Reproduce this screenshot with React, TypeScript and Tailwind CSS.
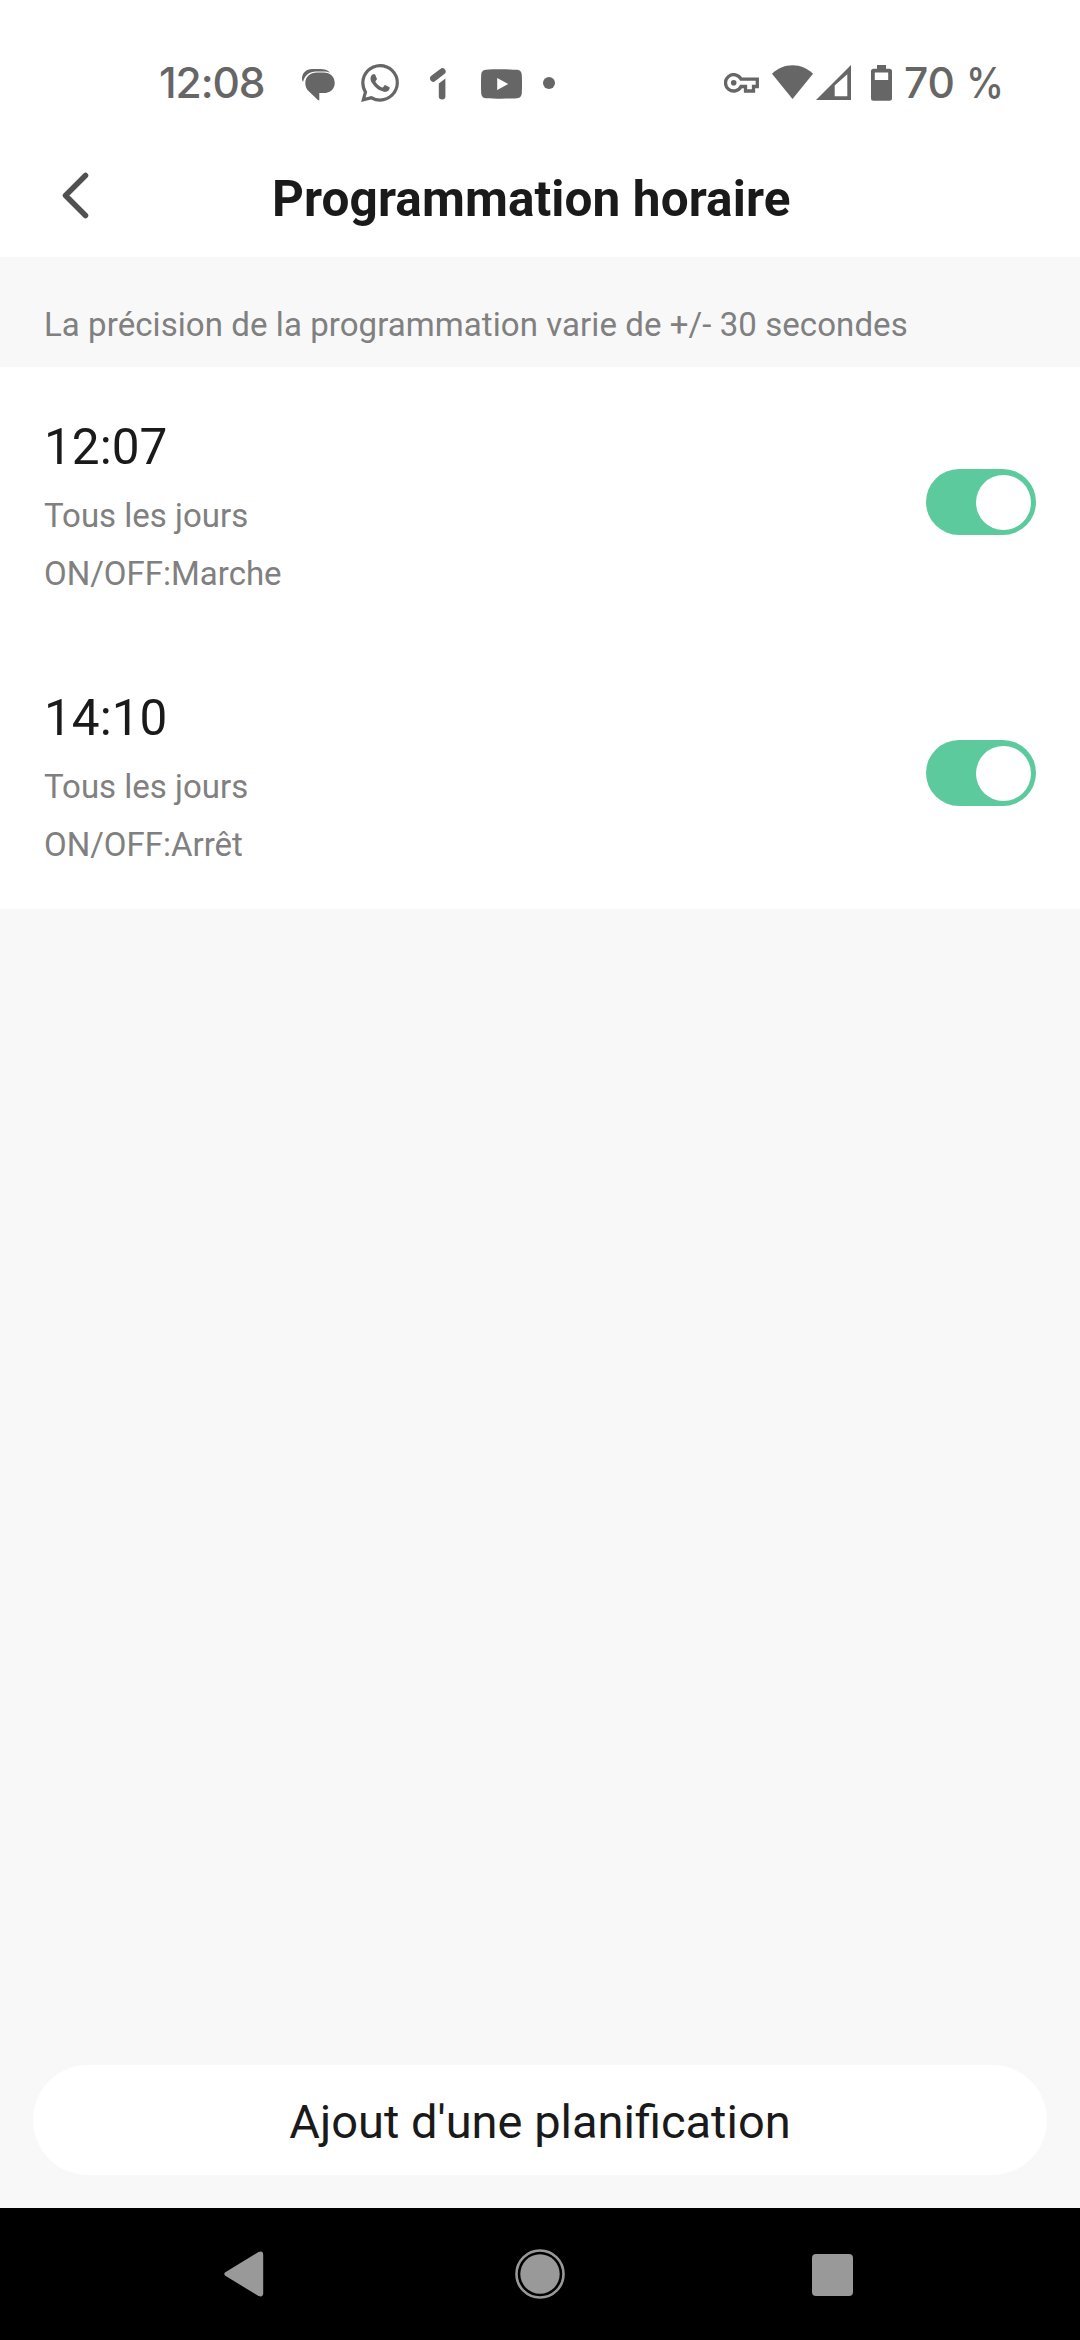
import { SiWhatsapp } from "react-icons/si";

const schedules = [
  { time: "12:07", repeat: "Tous les jours", action: "ON/OFF:Marche" },
  { time: "14:10", repeat: "Tous les jours", action: "ON/OFF:Arrêt" },
];

function MessagesIcon() {
  return (
    <svg className="h-8 w-[33px]" viewBox="0 0 33 32" fill="currentColor">
      <path d="M15 3.6H21.5C28.5 3.6 32.7 8 32.7 13.9S28.5 24 21.5 24H17.3V31.3H16.2L7 22.4C4.5 20.4 3.3 17.6 3.3 14C3.3 8 8 3.6 15 3.6Z" />
      <path d="M1.1 12.8C.4 12 0 10.8 0 9.4C0 4 4.3 0 10 0H18C22.500 0 25.500 1 28.200 3.800C26 2.900 24 2.500 21.500 2.500H14C7.500 2.500 2.600 6.500 1.100 12.800Z" />
    </svg>
  );
}

function OneIcon() {
  return (
    <svg className="h-8 w-4" viewBox="0 0 16 32" fill="currentColor">
      <path d="M3.300 10.400L12.300 3.500" stroke="currentColor" strokeWidth="6.600" strokeLinecap="round" />
      <path d="M8.800 15.500L15.400 10.400V28.200A3.300 3.300 0 0 1 8.800 28.200Z" />
    </svg>
  );
}

function VideoIcon() {
  return (
    <svg className="h-[30px] w-[41px]" viewBox="0 0 41 30" fill="currentColor">
      <path
        fillRule="evenodd"
        d="M5 .8C12 .2 29 .2 36 .8C39.500 1.200 40.600 3 40.800 6C41.100 12 41.100 18 40.800 24C40.600 27 39.500 28.800 36 29.200C29 29.800 12 29.800 5 29.200C1.500 28.800.400 27 .2 24C-.1 18-.1 12 .2 6C.4 3 1.500 1.200 5 .8ZM16.200 9V21L27.200 15Z"
      />
    </svg>
  );
}

function KeyIcon() {
  return (
    <svg className="h-5 w-[35px]" viewBox="0 0 35 20" fill="none" stroke="currentColor" strokeWidth="3.300">
      <path d="M17 6.100A8.200 8.200 0 1 0 17 13.500H21.500V18H29.500V13.500H33.300V6.100Z" />
      <circle cx="9.700" cy="9.800" r="2.800" fill="currentColor" stroke="none" />
    </svg>
  );
}

function WifiIcon() {
  return (
    <svg className="h-[34px] w-[41px]" viewBox="0 0 41 34" fill="currentColor">
      <path d="M20.500 34L0 8.800C5.500 3.200 12.500.2 20.500.2S35.500 3.200 41 8.800Z" />
    </svg>
  );
}

function SignalIcon() {
  return (
    <svg className="h-[35px] w-[35px]" viewBox="0 0 35 35" fill="currentColor">
      <path fillRule="evenodd" d="M0 35L35 0V35ZM18.700 20.500V31.300H31.300V9.300Z" />
    </svg>
  );
}

function BatteryIcon() {
  return (
    <svg className="h-9 w-[21px]" viewBox="0 0 21 36" fill="currentColor">
      <path
        fillRule="evenodd"
        d="M6 0H15V3.800H18.500Q21 3.800 21 6.300V33.200Q21 35.700 18.500 35.700H2.500Q0 35.700 0 33.200V6.300Q0 3.800 2.500 3.800H6ZM3.800 7.500V15H17.200V7.500Z"
      />
    </svg>
  );
}

function StatusBar() {
  return (
    <div className="flex h-[125px] items-center pt-[62px] pb-[21px] font-[Inter] text-[42.5px] font-medium leading-[42px] text-[#666666]">
      <span className="ml-[159px] w-[108px] whitespace-nowrap tracking-[-1.1px]">12:08</span>
      <span className="ml-[35px] mt-[3px]"><MessagesIcon /></span>
      <SiWhatsapp className="ml-[26px] size-[38px] shrink-0" />
      <span className="ml-[31px] mt-px"><OneIcon /></span>
      <span className="ml-[35px] mt-px"><VideoIcon /></span>
      <span className="ml-[21px] size-3 rounded-full bg-[#666666]" />
      <span className="ml-[169px]"><KeyIcon /></span>
      <span className="ml-[13px] -mt-0.5"><WifiIcon /></span>
      <span className="ml-[3px] -mt-px"><SignalIcon /></span>
      <span className="ml-5"><BatteryIcon /></span>
      <span className="ml-3 flex whitespace-nowrap">
        <span>70</span>
        <span className="ml-[11px] origin-left scale-x-90">%</span>
      </span>
    </div>
  );
}

function Header() {
  return (
    <header className="flex h-[132px] items-start">
      <button className="ml-[61px] mt-[47px]" aria-label="Retour">
        <svg className="h-[48px] w-[28px]" viewBox="0 0 28 48" fill="none" stroke="#505050" strokeWidth="5.500" strokeLinecap="round" strokeLinejoin="round">
          <path d="M24.500 3.500L4.500 23.500L24.500 43.500" />
        </svg>
      </button>
      <h1 className="ml-[183px] mt-[45px] whitespace-nowrap text-[49.5px] font-bold leading-[58px] tracking-[0.1px] text-[#1a1a1a]">
        Programmation horaire
      </h1>
    </header>
  );
}

function Toggle() {
  return (
    <button role="switch" aria-checked="true" className="-mt-px flex h-[66px] w-[110px] items-center justify-end rounded-full bg-[#5dca9e] pr-[5.5px]">
      <span className="size-[55px] rounded-full bg-white" />
    </button>
  );
}

export default function App() {
  return (
    <div className="flex h-[2340px] w-[1080px] flex-col overflow-hidden bg-[#f8f8f8] font-[Roboto,sans-serif]">
      <div className="bg-white">
        <StatusBar />
        <Header />
      </div>
      <p className="h-[110px] pl-11 pt-12 text-[33px] leading-[39px] tracking-[0.07px] text-[#808080]">
        La précision de la programmation varie de +/- 30 secondes
      </p>
      <ul className="bg-white">
        {schedules.map((s) => (
          <li key={s.time} className="flex h-[271px] items-center justify-between px-11">
            <div className="flex h-full flex-col pt-[51px] text-[33px] leading-[39px] text-[#808080]">
              <span className="text-[49.5px] leading-[58px] text-[#1a1a1a]">{s.time}</span>
              <span className="mt-5">{s.repeat}</span>
              <span className="mt-[19px]">{s.action}</span>
            </div>
            <Toggle />
          </li>
        ))}
      </ul>
      <div className="mt-auto px-[33px] pb-[33px]">
        <button className="flex h-[110px] w-full justify-center rounded-full bg-white pt-[29px] text-[47px] leading-[55px] text-[#1a1a1a]">
          Ajout d'une planification
        </button>
      </div>
      <nav className="flex h-[132px] shrink-0 items-center bg-black text-[#999999]">
        <svg className="ml-[224px] h-[46px] w-10" viewBox="0 0 40 46" fill="currentColor">
          <path d="M1.300 21.300L34.500 1Q39.200-.8 39.200 4V42Q39.200 46.800 34.500 45L1.300 24.700Q-.8 23 1.300 21.300Z" />
        </svg>
        <svg className="ml-[251px] size-[50px]" viewBox="0 0 50 50">
          <circle cx="25" cy="25" r="23.500" fill="none" stroke="currentColor" strokeWidth="2.600" />
          <circle cx="25" cy="25" r="19.700" fill="currentColor" />
        </svg>
        <span className="ml-[247px] mt-px h-[42px] w-[41px] rounded-[4px] bg-[#999999]" />
      </nav>
    </div>
  );
}
